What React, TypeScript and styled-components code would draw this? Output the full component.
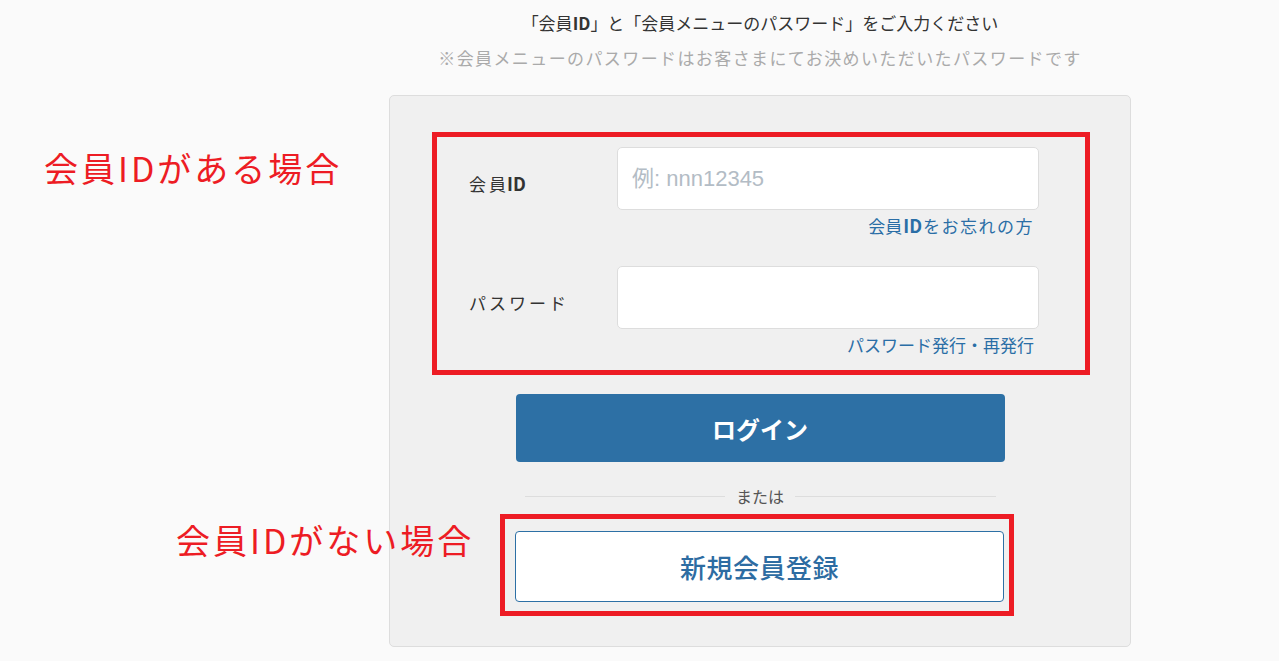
import React from 'react';
import styled, { createGlobalStyle } from 'styled-components';

const GlobalStyle = createGlobalStyle`
  html, body {
    margin: 0;
    padding: 0;
    background: #fafafa;
  }
  body {
    font-family: "Noto Sans CJK JP", "Noto Sans", sans-serif;
    color: #333;
  }
`;

const Page = styled.div`
  position: relative;
  min-height: 661px;
  box-sizing: border-box;
  padding: 10px 0 0 389px;
`;

const Column = styled.div`
  width: 742px;
  display: flex;
  flex-direction: column;
  align-items: center;
`;

const Lead = styled.p<{ $muted?: boolean }>`
  margin: 0;
  font-size: 17px;
  line-height: 25px;
  font-weight: 400;
  color: ${(p) => (p.$muted ? '#aaa' : '#333')};
  letter-spacing: ${(p) => (p.$muted ? '1.4px' : '0')};
  & + & {
    margin-top: 10px;
  }
  b {
    font-weight: 700;
  }
`;

const Card = styled.div`
  width: 742px;
  box-sizing: border-box;
  margin-top: 25px;
  padding: 36px 0 30px;
  background: #f0f0f0;
  border: 1px solid #ddd;
  border-radius: 5px;
  display: flex;
  flex-direction: column;
  align-items: center;
`;

// red annotation frames drawn on top of the screenshot
const FieldsFrame = styled.div`
  align-self: stretch;
  margin: 0 40px 0 42px;
  border: 5px solid #ed1c24;
  padding: 10px 46px 13px 32px;
`;

const RegisterFrame = styled.div`
  align-self: flex-start;
  margin: 6px 0 0 110px;
  border: 5px solid #ed1c24;
  padding: 12px 5px 9px 10px;
`;

const Field = styled.div`
  display: grid;
  grid-template-columns: 148px 1fr;
  & + & {
    margin-top: 28px;
  }
`;

const Label = styled.label`
  padding-top: 25px;
  font-size: 17px;
  line-height: 24px;
  letter-spacing: 3px;
  color: #333;
  b {
    margin-left: -2px;
    letter-spacing: 0;
    font-size: 18px;
    line-height: 1;
    font-weight: 700;
  }
`;

const InputCol = styled.div`
  display: flex;
  flex-direction: column;
`;

const TextInput = styled.input`
  width: 100%;
  height: 63px;
  box-sizing: border-box;
  padding: 0 14px;
  border: 1px solid #ddd;
  border-radius: 5px;
  background: #fff;
  font-family: "Liberation Sans", "Noto Sans CJK JP", sans-serif;
  font-size: 22px;
  color: #333;
  outline: none;
  &::placeholder {
    color: #b3bcc5;
  }
`;

const HelpLink = styled.a`
  align-self: flex-end;
  height: 24px;
  margin: 4px 5px 0 0;
  font-size: 17px;
  line-height: 24px;
  color: #2a6ea6;
  text-decoration: none;
  b {
    margin: 0 1px;
    font-size: 18px;
    line-height: 1;
    font-weight: 700;
  }
`;

const Spaced = styled.span`
  letter-spacing: 1.5px;
`;

const LoginButton = styled.button`
  margin-top: 19px;
  width: 489px;
  height: 68px;
  border: none;
  border-radius: 4px;
  background: #2d70a5;
  color: #fff;
  font-family: inherit;
  font-size: 24px;
  font-weight: 700;
  cursor: pointer;
`;

const Divider = styled.div`
  margin-top: 22px;
  width: 471px;
  display: flex;
  align-items: center;
  gap: 11px;
  font-size: 16px;
  line-height: 24px;
  color: #555;
  &::before,
  &::after {
    content: '';
    flex: 1;
    height: 1px;
    background: #ddd;
  }
`;

const RegisterButton = styled.button`
  display: block;
  width: 489px;
  height: 71px;
  box-sizing: border-box;
  border: 1px solid #2d70a5;
  border-radius: 4px;
  background: #fff;
  color: #2d6ca2;
  font-family: inherit;
  font-size: 26px;
  font-weight: 500;
  letter-spacing: 0.5px;
  cursor: pointer;
`;

const Note = styled.span<{ $top: number; $left: number }>`
  position: absolute;
  top: ${(p) => p.$top}px;
  left: ${(p) => p.$left}px;
  font-size: 34px;
  line-height: 40px;
  letter-spacing: 3px;
  color: #ed1c24;
  white-space: nowrap;
`;

const App = () => (
  <Page>
    <GlobalStyle />
    <Column>
      <Lead>
        「会員<b>ID</b>」と「会員メニューのパスワード」をご入力ください
      </Lead>
      <Lead $muted>※会員メニューのパスワードはお客さまにてお決めいただいたパスワードです</Lead>
      <Card>
        <FieldsFrame>
          <Field>
            <Label htmlFor="member-id">
              会員<b>ID</b>
            </Label>
            <InputCol>
              <TextInput id="member-id" type="text" placeholder="例: nnn12345" />
              <HelpLink href="#">
                会員<b>ID</b>
                <Spaced>をお忘れの方</Spaced>
              </HelpLink>
            </InputCol>
          </Field>
          <Field>
            <Label htmlFor="member-pw">パスワード</Label>
            <InputCol>
              <TextInput id="member-pw" type="password" />
              <HelpLink href="#">パスワード発行・再発行</HelpLink>
            </InputCol>
          </Field>
        </FieldsFrame>
        <LoginButton type="button">ログイン</LoginButton>
        <Divider>または</Divider>
        <RegisterFrame>
          <RegisterButton type="button">新規会員登録</RegisterButton>
        </RegisterFrame>
      </Card>
    </Column>
    <Note $top={148} $left={44}>
      会員IDがある場合
    </Note>
    <Note $top={520} $left={176}>
      会員IDがない場合
    </Note>
  </Page>
);

export default App;
